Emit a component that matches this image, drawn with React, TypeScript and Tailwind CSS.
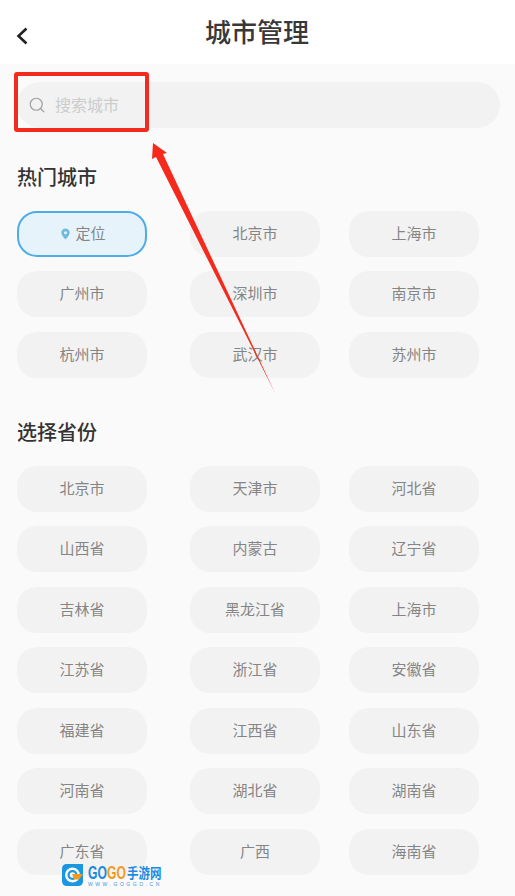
import React from 'react';
import { Search } from 'lucide-react';

const cjk = "font-['Roboto','Noto_Sans_CJK_SC',sans-serif]";

const hotCities = ['北京市', '上海市', '广州市', '深圳市', '南京市', '杭州市', '武汉市', '苏州市'];
const provinces = [
    '北京市', '天津市', '河北省',
    '山西省', '内蒙古', '辽宁省',
    '吉林省', '黑龙江省', '上海市',
    '江苏省', '浙江省', '安徽省',
    '福建省', '江西省', '山东省',
    '河南省', '湖北省', '湖南省',
    '广东省', '广西', '海南省',
];

const Chip: React.FC<{ label: string }> = ({ label }) => (
    <div className="flex h-[46px] w-[130px] items-center justify-center rounded-[20px] bg-[#f2f2f2] text-[15px] text-[#858585]">
        {label}
    </div>
);

const LocateChip: React.FC = () => (
    <div className="flex h-[46px] w-[130px] items-center justify-center gap-[5px] rounded-[20px] border-2 border-[#4fade6] bg-[#e6f3fb] pl-[3px] text-[15px] text-[#858585]">
        <svg width="9" height="12" viewBox="0 0 10 12">
            <path d="M5 0a4.6 4.6 0 0 0-4.6 4.6C.4 7.8 5 12 5 12s4.6-4.2 4.6-7.4A4.6 4.6 0 0 0 5 0Zm0 6.3a1.7 1.7 0 1 1 0-3.4 1.7 1.7 0 0 1 0 3.4Z" fill="#6fbbdc" />
        </svg>
        <span>定位</span>
    </div>
);

export default function App() {
    return (
        <div className={`relative h-[896px] w-[515px] overflow-hidden bg-[#fafafa] ${cjk}`}>
            <header className="relative flex h-16 items-center justify-center bg-white">
                <svg className="absolute left-[15px] top-[26px]" width="14" height="20" viewBox="0 0 14 20">
                    <path d="M11.5 2.5 L3.5 10 L11.5 17.5" fill="none" stroke="#222222" strokeWidth="2.6" />
                </svg>
                <h1 className="mt-[1px] mr-[1px] text-[26px] font-medium leading-none text-[#383838]">城市管理</h1>
            </header>

            <div className="px-[17px] pt-[17.9px]">
                <div className="flex h-[46px] w-[483px] items-center rounded-full bg-[#f2f2f2] pl-[11px]">
                    <Search className="text-[#a0a0a0]" size={18} strokeWidth={1.6} />
                    <span className="ml-[9px] pt-[2px] text-[16px] leading-[24px] text-[#cccccc]">搜索城市</span>
                </div>

                <h2 className="mt-[36px] text-[20px] font-medium leading-[28px] text-[#333333]">热门城市</h2>
                <div className="mt-[19px] grid grid-cols-[173px_159px_130px] gap-y-[14.5px]">
                    <LocateChip />
                    {hotCities.map((city) => (
                        <Chip key={city} label={city} />
                    ))}
                </div>

                <h2 className="mt-[41px] text-[20px] font-medium leading-[28px] text-[#333333]">选择省份</h2>
                <div className="mt-[19px] grid grid-cols-[173px_159px_130px] gap-y-[14.5px]">
                    {provinces.map((name) => (
                        <Chip key={name} label={name} />
                    ))}
                </div>
            </div>

            {/* annotation over the screenshot */}
            <div className="absolute left-[14px] top-[72px] h-[60px] w-[135px] rounded-[3px] border-[4px] border-[#f32a1e]" />
            <svg className="absolute left-[145px] top-[138px]" width="135" height="260" viewBox="0 0 135 260">
                <path d="M8 5 L22 15 L18 16 L130 255 L11 19 L7 21 Z" fill="#f52a1c" />
            </svg>

            {/* watermark */}
            <div className="absolute left-[62px] top-[864px] flex items-start gap-[5px]">
                <svg width="21" height="22" viewBox="0 0 21 22">
                    <path d="M5 0H21V17Q21 22 16 22H5Q0 22 0 17V5Q0 0 5 0Z" fill="#1a97e0" />
                    <circle cx="10.5" cy="11" r="7.5" fill="#ffffff" />
                    <circle cx="10.5" cy="11" r="5" fill="#1a97e0" />
                    <circle cx="10.5" cy="11" r="2.8" fill="#ffffff" />
                    <path d="M10 10H21L17 15.5H12Z" fill="#f29a1f" />
                </svg>
                <div className="flex w-[73px] flex-col whitespace-nowrap">
                    <div className="mt-[1px] flex h-[16px] items-center font-bold leading-none font-['Liberation_Sans','Noto_Sans_CJK_SC',sans-serif]">
                        <span className="w-[19px]"><span className="inline-block origin-left scale-x-[0.76] scale-y-[1.1] text-[16px] text-[#1a8ae0]">GO</span></span>
                        <span className="w-[20px]"><span className="inline-block origin-left scale-x-[0.76] scale-y-[1.1] text-[16px] text-[#f29a1f]">GO</span></span>
                        <span className="inline-block w-[34px] origin-left scale-x-[0.82] text-[14px] text-[#1a8ae0]">手游网</span>
                    </div>
                    <span className="mt-[1px] text-[5px] leading-[5px] tracking-[2.55px] text-[#3b93d8] font-['Liberation_Sans',sans-serif]">WWW.GOGGO.CN</span>
                </div>
            </div>
        </div>
    );
}
